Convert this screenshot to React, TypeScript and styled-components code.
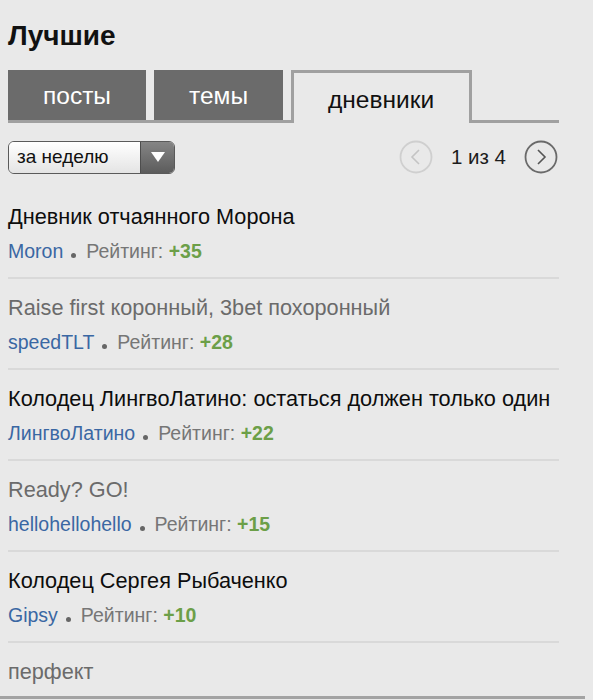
import React from 'react';
import styled, { createGlobalStyle } from 'styled-components';

const GlobalStyle = createGlobalStyle`
  html, body {
    margin: 0;
    padding: 0;
    background: #e9e9e9;
    font-family: "Liberation Sans", Arial, sans-serif;
  }
`

const Page = styled.div`
  position: relative;
  width: 585px;
  height: 696px;
  border-bottom: 3px solid #a3a3a3;
  overflow: hidden;
`

const Content = styled.div`
  width: 551px;
  padding: 0 8px;
`

const Title = styled.h1`
  margin: 0;
  padding-top: 20px;
  font-size: 28px;
  line-height: 32px;
  font-weight: bold;
  color: #111;
`

const TabBar = styled.div`
  display: flex;
  align-items: flex-start;
  gap: 8px;
  margin-top: 18px;
  height: 50px;
  border-bottom: 3px solid #a0a0a0;
`

const Tab = styled.div<{ $active?: boolean }>`
  box-sizing: border-box;
  height: ${p => (p.$active ? '53px' : '50px')};
  padding: ${p => (p.$active ? '3px 35px 0 34px' : '2px 35px 0')};
  display: flex;
  align-items: center;
  font-size: 24.5px;
  color: ${p => (p.$active ? '#111' : '#fff')};
  background: ${p => (p.$active ? '#e9e9e9' : '#6b6b6b')};
  border: ${p => (p.$active ? '3px solid #a0a0a0' : 'none')};
  border-bottom: none;
`

const ScrollThumb = styled.div`
  position: absolute;
  left: 587px;
  top: 102px;
  width: 2px;
  height: 48px;
  background: #a8a8a8;
`

const FilterRow = styled.div`
  display: flex;
  align-items: center;
  justify-content: space-between;
  margin-top: 17px;
  height: 34px;
`

const Select = styled.div`
  box-sizing: border-box;
  display: flex;
  width: 167px;
  height: 33px;
  border: 1px solid #5a5a5a;
  border-radius: 6px;
  overflow: hidden;
`

const SelectValue = styled.div`
  flex: 1;
  display: flex;
  align-items: center;
  padding-left: 8px;
  font-size: 19px;
  color: #111;
  background: linear-gradient(#ffffff, #e4e4e4);
`

const SelectArrow = styled.div`
  width: 33px;
  display: flex;
  align-items: center;
  justify-content: center;
  border-left: 1px solid #4d4d4d;
  background: linear-gradient(#858585, #5c5c5c);
`

const Pager = styled.div`
  display: flex;
  align-items: center;
  gap: 18px;
  font-size: 20.5px;
  color: #1c1c1c;
  margin-right: 1px;
`

const List = styled.div`
  margin-top: 14px;
`

const Item = styled.div<{ $last?: boolean }>`
  padding: 16px 0 ${p => (p.$last ? '0' : '14px')};
  border-bottom: ${p => (p.$last ? 'none' : '2px solid #d9d9d9')};
`

const ItemTitle = styled.div<{ $visited?: boolean }>`
  font-size: 21.7px;
  line-height: 25px;
  color: ${p => (p.$visited ? '#6b6b6b' : '#0d0d0d')};
  white-space: nowrap;
`

const Meta = styled.div`
  margin-top: 10px;
  font-size: 19.5px;
  line-height: 24px;
  color: #767676;
  white-space: nowrap;
`

const Author = styled.span`
  color: #3a67a3;
`

const Dot = styled.span`
  display: inline-block;
  width: 5px;
  height: 5px;
  margin: 0 10px 0 8px;
  border-radius: 50%;
  background: #666;
  vertical-align: 0;
`

const Score = styled.span`
  color: #6c9f48;
  font-weight: bold;
`

const PagerButton = ({ dir, disabled }: { dir: 'prev' | 'next'; disabled?: boolean }) => {
  const c = disabled ? '#cfcfcf' : '#6a6a6a'
  const chev = disabled ? '#c4c4c4' : '#555'
  return (
    <svg width="34" height="34" viewBox="0 0 34 34">
      <circle cx="17" cy="17" r="15.5" fill="none" stroke={c} strokeWidth="1.8" />
      {dir === 'prev' ? (
        <polyline points="20,10 13,17 20,24" fill="none" stroke={chev} strokeWidth="1.6" />
      ) : (
        <polyline points="14,10 21,17 14,24" fill="none" stroke={chev} strokeWidth="1.6" />
      )}
    </svg>
  )
}

const posts = [
  { title: 'Дневник отчаянного Морона', author: 'Moron', score: '+35' },
  { title: 'Raise first коронный, 3bet похоронный', author: 'speedTLT', score: '+28', visited: true },
  { title: 'Колодец ЛингвоЛатино: остаться должен только один', author: 'ЛингвоЛатино', score: '+22' },
  { title: 'Ready? GO!', author: 'hellohellohello', score: '+15', visited: true },
  { title: 'Колодец Сергея Рыбаченко', author: 'Gipsy', score: '+10' },
]

function App() {
  return (
    <Page>
      <GlobalStyle />
      <ScrollThumb />
      <Content>
        <Title>Лучшие</Title>
        <TabBar>
          <Tab>посты</Tab>
          <Tab>темы</Tab>
          <Tab $active>дневники</Tab>
        </TabBar>
        <FilterRow>
          <Select>
            <SelectValue>за неделю</SelectValue>
            <SelectArrow>
              <svg width="16" height="12" viewBox="0 0 16 12">
                <polygon points="1,1 15,1 8,11" fill="#fff" />
              </svg>
            </SelectArrow>
          </Select>
          <Pager>
            <PagerButton dir="prev" disabled />
            <span>1 из 4</span>
            <PagerButton dir="next" />
          </Pager>
        </FilterRow>
        <List>
          {posts.map(p => (
            <Item key={p.title}>
              <ItemTitle $visited={p.visited}>{p.title}</ItemTitle>
              <Meta>
                <Author>{p.author}</Author>
                <Dot />
                Рейтинг: <Score>{p.score}</Score>
              </Meta>
            </Item>
          ))}
          <Item $last>
            <ItemTitle $visited>перфект</ItemTitle>
          </Item>
        </List>
      </Content>
    </Page>
  );
}

export default App;
